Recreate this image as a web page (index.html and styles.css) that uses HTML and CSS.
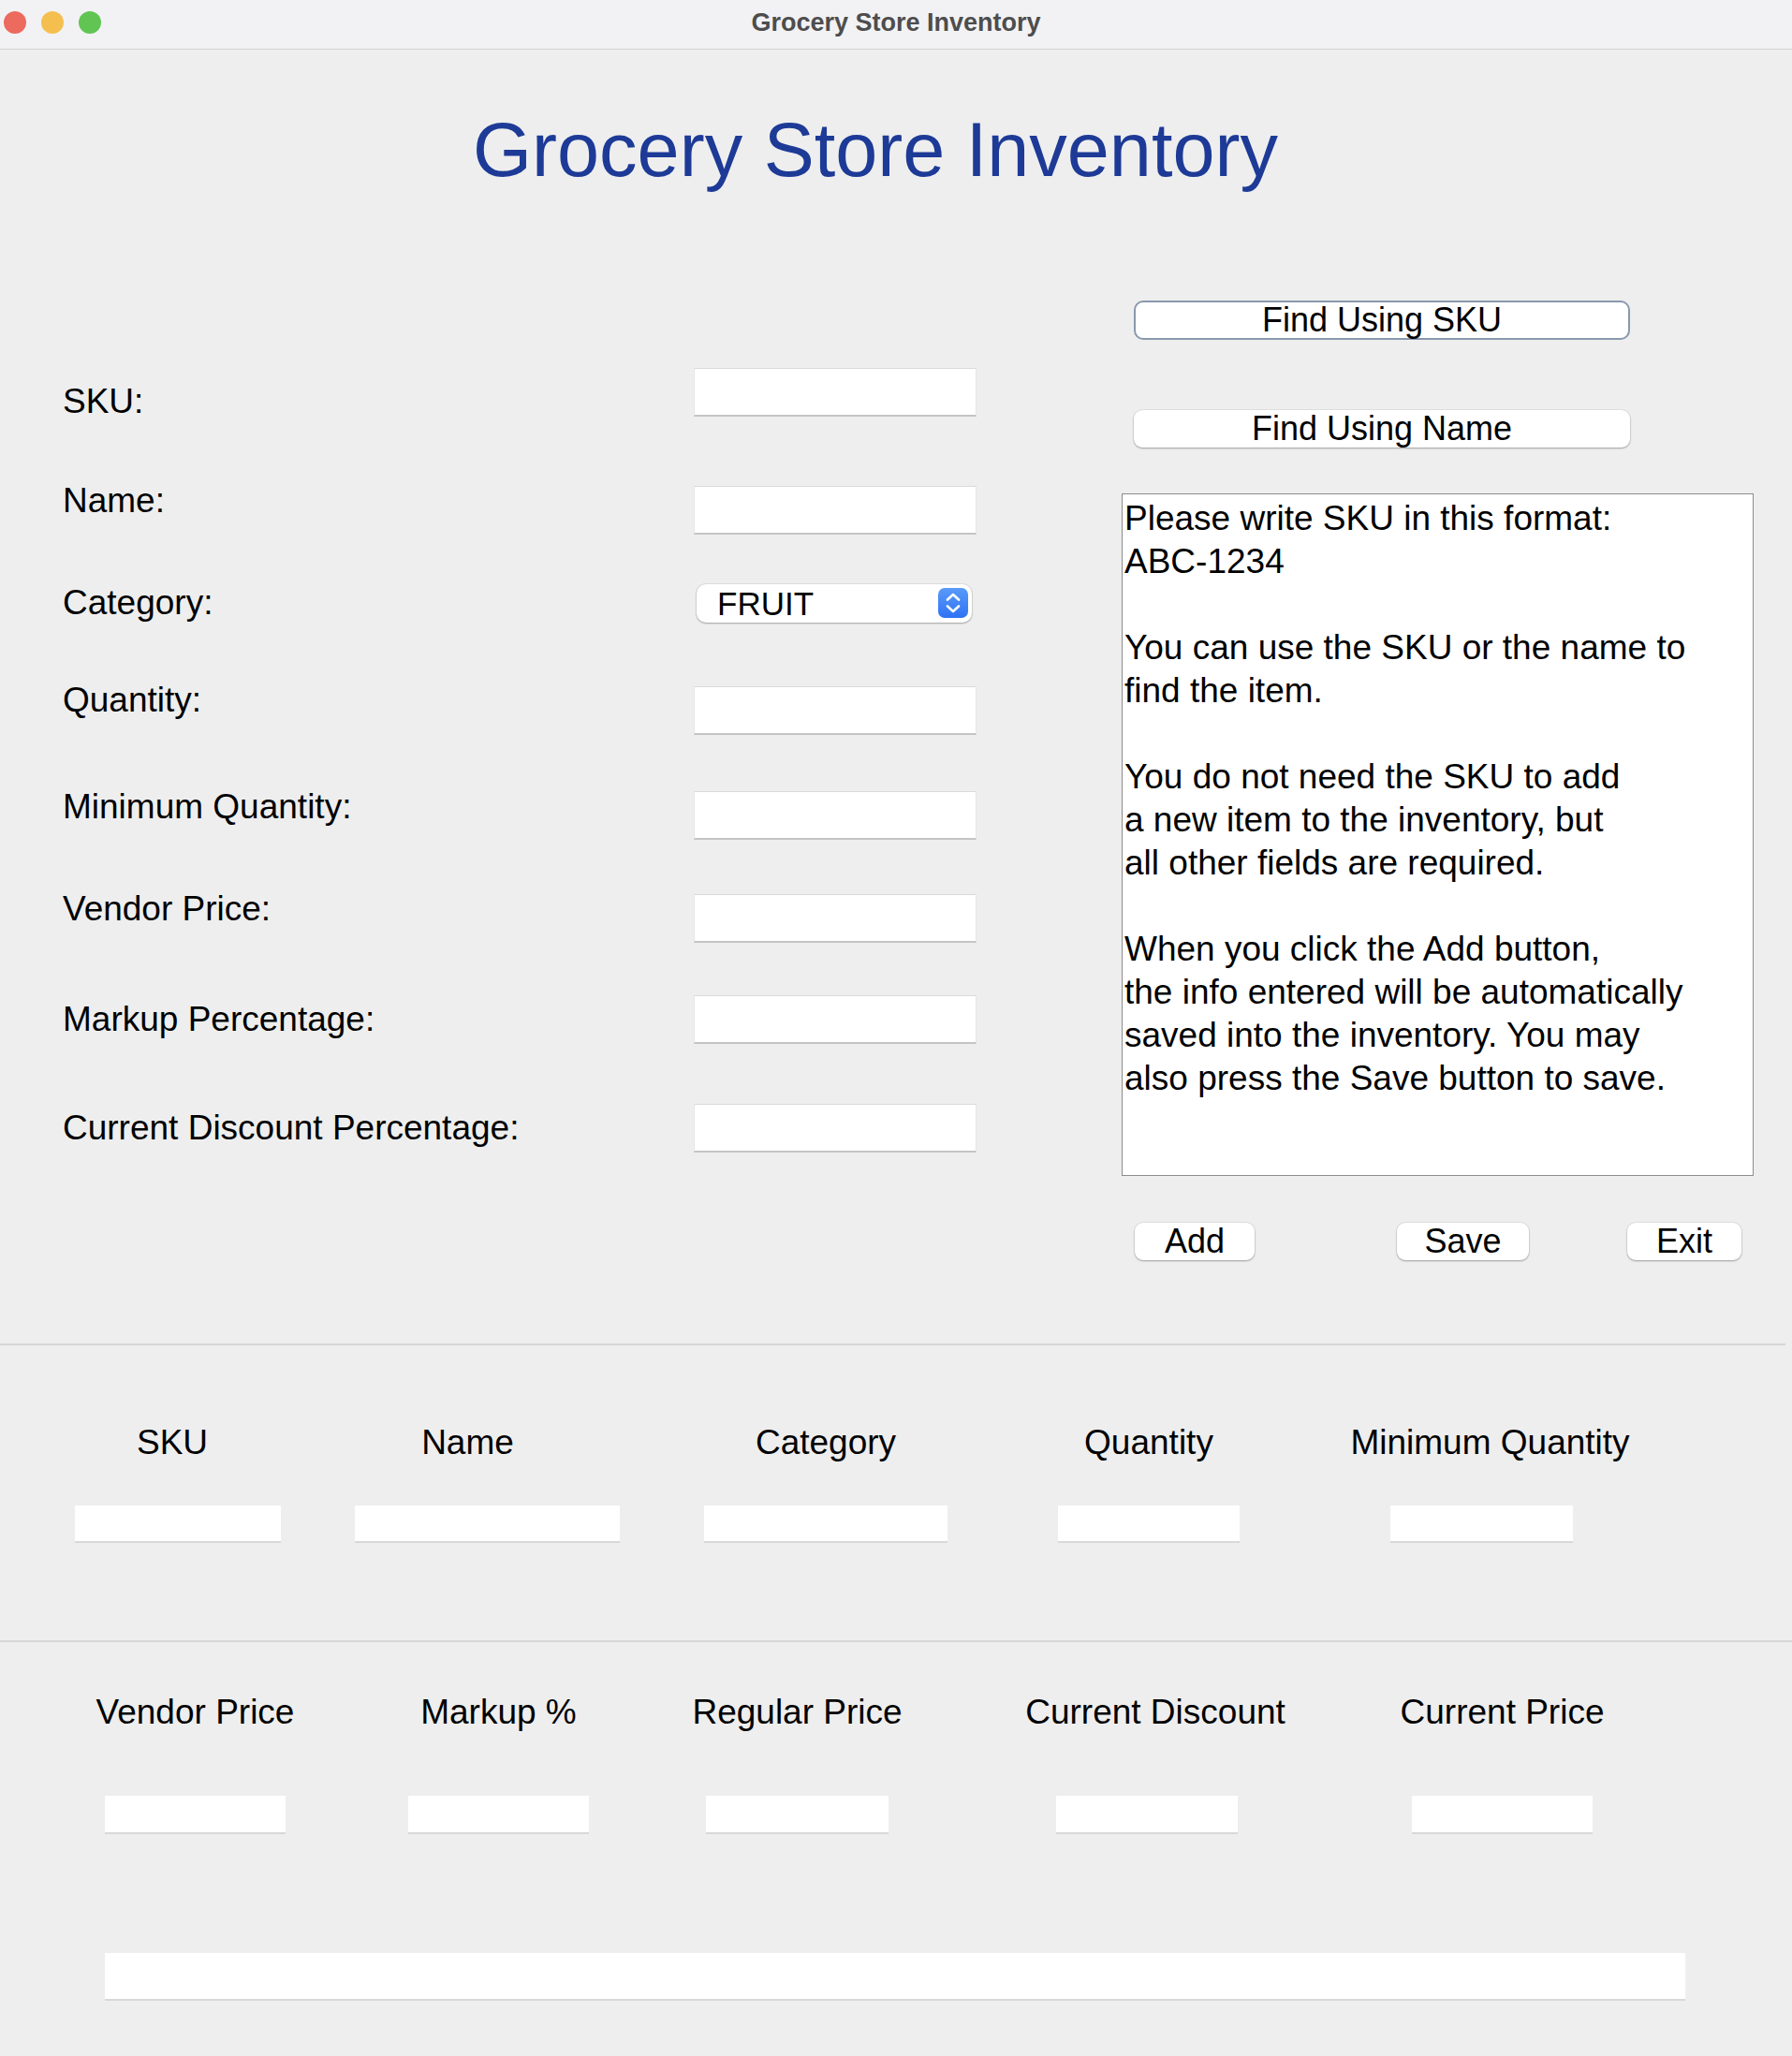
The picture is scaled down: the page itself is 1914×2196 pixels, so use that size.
FILE: index.html
```html
<!DOCTYPE html>
<html lang="en">
<head>
  <meta charset="UTF-8">
  <meta name="viewport" content="width=device-width, initial-scale=1.0">
  <title>Grocery Store Inventory</title>
  <link rel="stylesheet" href="styles.css">
</head>
<body>
  <div class="window">
    <!-- title bar -->
    <div class="titlebar">
      <div class="lights">
        <span class="light light-red"></span>
        <span class="light light-yellow"></span>
        <span class="light light-green"></span>
      </div>
      <div class="window-title">Grocery Store Inventory</div>
      <div></div>
    </div>

    <div class="content">
      <h1 class="app-title">Grocery Store Inventory</h1>

      <!-- entry form + help -->
      <div class="top-section">
        <div class="form">
          <div class="field field-sku">
            <span class="field-label label-low">SKU:</span>
            <div class="text-box"></div>
          </div>
          <div class="field field-name">
            <span class="field-label label-high">Name:</span>
            <div class="text-box"></div>
          </div>
          <div class="field field-category">
            <span class="field-label">Category:</span>
            <div class="select-box">
              <span class="select-value">FRUIT</span>
              <span class="stepper">
                <svg width="32" height="32" viewBox="0 0 32 32">
                  <path d="M10 12.5 L16 7 L22 12.5" fill="none" stroke="#fff" stroke-width="2.6" stroke-linecap="round" stroke-linejoin="round"/>
                  <path d="M10 19.5 L16 25 L22 19.5" fill="none" stroke="#fff" stroke-width="2.6" stroke-linecap="round" stroke-linejoin="round"/>
                </svg>
              </span>
            </div>
          </div>
          <div class="field field-quantity">
            <span class="field-label label-high-more">Quantity:</span>
            <div class="text-box"></div>
          </div>
          <div class="field field-min">
            <span class="field-label label-high-less">Minimum Quantity:</span>
            <div class="text-box"></div>
          </div>
          <div class="field field-vendor">
            <span class="field-label label-high">Vendor Price:</span>
            <div class="text-box"></div>
          </div>
          <div class="field field-markup">
            <span class="field-label">Markup Percentage:</span>
            <div class="text-box"></div>
          </div>
          <div class="field field-discount">
            <span class="field-label">Current Discount Percentage:</span>
            <div class="text-box"></div>
          </div>
        </div>

        <div class="side">
          <button class="mac-button find-button find-sku">Find Using SKU</button>
          <button class="mac-button find-button find-name">Find Using Name</button>

          <div class="help-box">Please write SKU in this format:<br>ABC-1234<br><br>You can use the SKU or the name to<br>find the item.<br><br>You do not need the SKU to add<br>a new item to the inventory, but<br>all other fields are required.<br><br>When you click the Add button,<br>the info entered will be automatically<br>saved into the inventory. You may<br>also press the Save button to save.</div>

          <div class="actions">
            <button class="mac-button btn-add">Add</button>
            <button class="mac-button btn-save">Save</button>
            <button class="mac-button btn-exit">Exit</button>
          </div>
        </div>
      </div>

      <div class="divider divider-first"></div>

      <!-- item summary -->
      <div class="info-row row-one">
        <div class="info-cell c-sku">
          <span class="info-heading shift-left-sm">SKU</span>
          <div class="info-box"></div>
        </div>
        <div class="info-cell c-name">
          <span class="info-heading shift-left-lg">Name</span>
          <div class="info-box"></div>
        </div>
        <div class="info-cell c-category">
          <span class="info-heading">Category</span>
          <div class="info-box"></div>
        </div>
        <div class="info-cell c-quantity">
          <span class="info-heading">Quantity</span>
          <div class="info-box"></div>
        </div>
        <div class="info-cell c-min">
          <span class="info-heading shift-right">Minimum Quantity</span>
          <div class="info-box"></div>
        </div>
      </div>

      <div class="divider divider-second"></div>

      <div class="info-row row-two">
        <div class="info-cell c-vendor">
          <span class="info-heading">Vendor Price</span>
          <div class="info-box"></div>
        </div>
        <div class="info-cell c-markup">
          <span class="info-heading">Markup %</span>
          <div class="info-box"></div>
        </div>
        <div class="info-cell c-regular">
          <span class="info-heading">Regular Price</span>
          <div class="info-box"></div>
        </div>
        <div class="info-cell c-discount">
          <span class="info-heading shift-right">Current Discount</span>
          <div class="info-box"></div>
        </div>
        <div class="info-cell c-current">
          <span class="info-heading">Current Price</span>
          <div class="info-box"></div>
        </div>
      </div>

      <div class="status-box"></div>
    </div>
  </div>
</body>
</html>
```

FILE: styles.css
```css
/* base */
* {
  box-sizing: border-box;
  margin: 0;
  padding: 0;
}

body {
  background-color: #eeeeee;
  color: #000;
  font-family: 'Liberation Sans', Arial, sans-serif;
}

.window {
  width: 1914px;
  min-height: 2196px;
  background-color: #eeeeee;
}

/* title bar */
.titlebar {
  display: grid;
  grid-template-columns: 1fr auto 1fr;
  align-items: center;
  height: 53px;
  background-color: #f2f2f4;
  border-bottom: 1px solid #d2d2d2;
}

.lights {
  display: flex;
  gap: 16px;
  padding-left: 4px;
  padding-bottom: 5px;
}

.light {
  width: 24px;
  height: 24px;
  border-radius: 50%;
}

.light-red { background-color: #ec6a5e; }
.light-yellow { background-color: #f5bf4f; }
.light-green { background-color: #61c554; }

.window-title {
  font-size: 27px;
  font-weight: bold;
  color: #4d4d4d;
  line-height: 32px;
  padding-bottom: 5px;
}

/* heading */
.app-title {
  margin-top: 67px;
  padding-right: 44px;
  font-size: 81px;
  line-height: 80px;
  font-weight: normal;
  text-align: center;
  color: #1d3a97;
}

/* top area */
.top-section {
  display: flex;
  align-items: flex-start;
  gap: 155px;
  padding-left: 67px;
}

.form {
  display: flex;
  flex-direction: column;
}

.field {
  display: flex;
  align-items: center;
}

.field-label {
  width: 674px;
  font-size: 37px;
  line-height: 46px;
}

.label-low { padding-top: 20px; }
.label-high { padding-bottom: 20px; }
.label-high-more { padding-bottom: 22px; }
.label-high-less { padding-bottom: 18px; }

.field-sku { margin-top: 186px; }
.field-name { margin-top: 60px; }
.field-category { margin-top: 43px; }
.field-quantity { margin-top: 58px; }
.field-min { margin-top: 46px; }
.field-vendor { margin-top: 45px; }
.field-markup { margin-top: 49px; }
.field-discount { margin-top: 64px; }

.text-box {
  width: 302px;
  height: 52px;
  background-color: #fff;
  border-top: 1px solid #dadada;
  border-left: 1px solid #e6e6e6;
  border-right: 1px solid #e6e6e6;
  border-bottom: 2px solid #c4c4c4;
}

.select-box {
  display: flex;
  align-items: center;
  justify-content: space-between;
  width: 294px;
  height: 41px;
  margin-left: 3px;
  padding: 0 4px 0 22px;
  background-color: #fff;
  border-radius: 10px;
  box-shadow: 0 1px 2px rgba(0, 0, 0, 0.28), 0 0 0 1px rgba(0, 0, 0, 0.06);
}

.select-value {
  font-size: 35px;
  line-height: 41px;
}

.stepper {
  display: flex;
  width: 32px;
  height: 32px;
  border-radius: 7px;
  background: linear-gradient(#5a9af8, #2f73f5);
}

/* right column */
.side {
  width: 675px;
  display: flex;
  flex-direction: column;
}

.mac-button {
  font-family: 'Liberation Sans', Arial, sans-serif;
  font-size: 36px;
  color: #000;
  background-color: #fff;
  border: none;
  border-radius: 9px;
  box-shadow: 0 1px 2px rgba(0, 0, 0, 0.3), 0 0 0 1px rgba(0, 0, 0, 0.05);
  height: 40px;
  line-height: 40px;
  padding: 0;
}

.find-button {
  width: 530px;
  margin-left: 13px;
}

.find-sku {
  height: 42px;
  line-height: 38px;
  margin-top: 121px;
  border: 2px solid #8a98ae;
  border-radius: 10px;
  box-shadow: none;
}

.find-name {
  margin-top: 75px;
}

.help-box {
  margin-top: 49px;
  height: 729px;
  padding: 3px 2px;
  background-color: #fff;
  border: 1px solid #8c8c8c;
  font-size: 37px;
  line-height: 46px;
  white-space: nowrap;
}

.actions {
  display: flex;
  margin-top: 50px;
}

.btn-add {
  width: 128px;
  margin-left: 14px;
}

.btn-save {
  width: 141px;
  margin-left: 152px;
}

.btn-exit {
  width: 122px;
  margin-left: 105px;
}

/* dividers */
.divider {
  height: 2px;
  background-color: #d6d6d6;
}

.divider-first {
  margin-top: 89px;
  margin-right: 7px;
}

.divider-second {
  margin-top: 104px;
}

/* bottom info rows */
.info-row {
  display: flex;
}

.info-cell {
  display: flex;
  flex-direction: column;
  align-items: center;
}

.info-heading {
  font-size: 37px;
  line-height: 46px;
  white-space: nowrap;
}

.shift-left-sm { margin-right: 12px; }
.shift-left-lg { margin-right: 42px; }
.shift-right { margin-left: 18px; }

.info-box {
  width: 100%;
  background-color: #fff;
  border-bottom: 2px solid #d8d8d8;
}

.row-one {
  margin-top: 81px;
}

.row-one .info-cell { gap: 44px; }
.row-one .info-box { height: 40px; }

.c-sku { margin-left: 80px; width: 220px; }
.c-name { margin-left: 79px; width: 283px; }
.c-category { margin-left: 90px; width: 260px; }
.c-quantity { margin-left: 118px; width: 194px; }
.c-min { margin-left: 161px; width: 195px; }

.row-two {
  margin-top: 52px;
}

.row-two .info-cell { gap: 66px; }
.row-two .info-box { height: 41px; }

.c-vendor { margin-left: 112px; width: 193px; }
.c-markup { margin-left: 131px; width: 193px; }
.c-regular { margin-left: 125px; width: 195px; }
.c-discount { margin-left: 179px; width: 194px; }
.c-current { margin-left: 186px; width: 193px; }

.status-box {
  margin: 127px 0 0 112px;
  width: 1688px;
  height: 51px;
  background-color: #fff;
  border-bottom: 2px solid #d8d8d8;
}
```
